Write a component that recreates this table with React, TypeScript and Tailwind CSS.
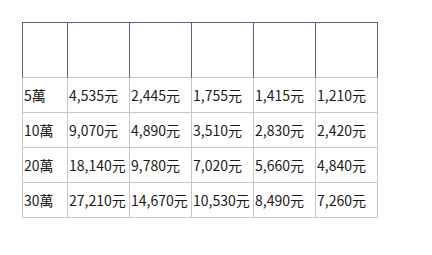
const rows = [
  ["5萬", "4,535元", "2,445元", "1,755元", "1,415元", "1,210元"],
  ["10萬", "9,070元", "4,890元", "3,510元", "2,830元", "2,420元"],
  ["20萬", "18,140元", "9,780元", "7,020元", "5,660元", "4,840元"],
  ["30萬", "27,210元", "14,670元", "10,530元", "8,490元", "7,260元"],
];

export default function App() {
  return (
    <div className="h-[255px] w-[432px] bg-white pl-[22px] pt-[22px] font-['Noto_Sans_CJK_TC','Noto_Sans',sans-serif] text-[14px] text-[#1a1a1a]">
      <div className="grid w-max grid-cols-[46px_62px_62px_62px_62px_62px]">
        {[0, 1, 2, 3, 4, 5].map((i) => (
          <div
            key={i}
            className={`h-[56px] border-b border-r border-t border-b-[#c6c6c6] border-r-[#54647f] border-t-[#54647f] ${
              i === 0 ? "border-l border-l-[#54647f]" : ""
            }`}
          />
        ))}
        {rows.map((row, r) =>
          row.map((cell, c) => (
            <div
              key={`${r}-${c}`}
              className={`flex h-[35px] items-center whitespace-nowrap border-b border-r border-[#c6c6c6] pl-px ${
                c === 0 ? "border-l" : ""
              }`}
            >
              {cell}
            </div>
          ))
        )}
      </div>
    </div>
  );
}
